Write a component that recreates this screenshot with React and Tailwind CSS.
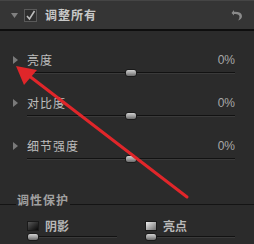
import React from "react";

const font = { fontFamily: '"Noto Sans CJK SC", "Noto Sans", sans-serif' };

function Thumb({ className = "" }) {
  return (
    <div
      className={
        "absolute top-1/2 -translate-y-1/2 w-[12px] h-[8px] rounded-[3px] border border-[#1a1a1a] bg-gradient-to-b from-[#d0d0d0] via-[#a0a0a0] to-[#6a6a6a] " +
        className
      }
    />
  );
}

function Track({ children }) {
  return (
    <div className="relative h-[8px] flex items-center">
      <div className="w-full h-[2px] bg-[#121212] border-b border-[#3a3a3a]" />
      {children}
    </div>
  );
}

function Row({ label }) {
  return (
    <div className="flex flex-col">
      <div className="flex items-center h-[16px] text-[12px] text-[#bdbdbd]">
        <div className="w-[14px] ml-[13px] flex items-center">
          <svg width="5" height="8" viewBox="0 0 5 8">
            <path d="M0 0 L5 4 L0 8 Z" fill="#7a7a7a" />
          </svg>
        </div>
        <span className="tracking-[1px]">{label}</span>
        <span className="ml-auto mr-[19px] text-[#a8a8a8]" style={{ fontFamily: '"Liberation Sans", sans-serif' }}>0%</span>
      </div>
      <div className="mt-[1px] ml-[27px] mr-[19px]">
        <Track>
          <Thumb className="left-[98px]" />
        </Track>
      </div>
    </div>
  );
}

export default function App() {
  return (
    <div className="relative w-[254px] h-[244px] bg-[#2b2b2b] overflow-hidden" style={font}>
      {/* header */}
      <div className="h-[29px] bg-[#353535] border-t border-[#454545] flex items-center">
        <svg className="ml-[11px]" width="7" height="5" viewBox="0 0 7 5">
          <path d="M0 0 L7 0 L3.5 5 Z" fill="#808080" />
        </svg>
        <div className="ml-[6px] w-[13px] h-[13px] border border-[#5a5a5a] bg-[#2e2e2e] flex items-center justify-center">
          <svg width="11" height="11" viewBox="0 0 11 11">
            <path d="M2 6 L4.5 9 L9.5 1" stroke="#bdbdbd" strokeWidth="1.6" fill="none" />
          </svg>
        </div>
        <span className="ml-[8px] text-[12px] font-bold text-[#c8c8c8] tracking-[1px]">调整所有</span>
        <svg className="ml-auto mr-[11px]" width="12" height="12" viewBox="0 0 12 12">
          <path d="M3 1 L0.5 4 L3 6.5 L3 5 Q8 4.5 8.5 7.5 Q8.5 10 7 11.5 Q11 10 11 7 Q10.5 2.5 3 2.8 Z" fill="#8a8a8a" />
        </svg>
      </div>
      <div className="h-[2px] bg-[#0e0e0e]" />

      {/* body */}
      <div className="flex flex-col">
        <div className="pt-[21px] flex flex-col gap-[18px]">
          <Row label="亮度" />
          <Row label="对比度" />
          <Row label="细节强度" />
        </div>

        {/* section title */}
        <div className="mt-[31px] flex items-end h-[12px]">
          <div className="w-[16px] h-[1px] bg-[#141414] mb-[1px]" />
          <span className="text-[12px] leading-[12px] font-bold text-[#a0a0a0] tracking-[1px] px-[1px]">调性保护</span>
          <div className="flex-1 h-[1px] bg-[#141414] mb-[1px]" />
        </div>

        <div className="mt-[14px] flex">
          <div className="w-[118px] ml-[27px] flex flex-col">
            <div className="flex items-center h-[11px]">
              <div className="w-[12px] h-[10px] border border-[#1a1a1a] bg-gradient-to-br from-[#5a5a5a] to-[#0a0a0a]" />
              <span className="ml-[6px] text-[12px] leading-[11px] font-bold text-[#b8b8b8]">阴影</span>
            </div>
            <div className="mt-[2px] w-[90px]">
              <Track>
                <Thumb className="left-0" />
              </Track>
            </div>
          </div>
          <div className="w-[90px] flex flex-col">
            <div className="flex items-center h-[11px]">
              <div className="w-[12px] h-[10px] border border-[#1a1a1a] bg-gradient-to-br from-[#f0f0f0] to-[#707070]" />
              <span className="ml-[6px] text-[12px] leading-[11px] font-bold text-[#b8b8b8]">亮点</span>
            </div>
            <div className="mt-[2px] w-[90px]">
              <Track>
                <Thumb className="left-0" />
              </Track>
            </div>
          </div>
        </div>
      </div>

      {/* red annotation arrow */}
      <svg className="absolute left-0 top-0 pointer-events-none" width="254" height="244" viewBox="0 0 254 244">
        <line x1="187" y1="197" x2="28" y2="75" stroke="#e0262a" strokeWidth="3" strokeLinecap="round" />
        <path d="M16 66 L37 70 L24 85 Z" fill="#e0262a" />
      </svg>
    </div>
  );
}
